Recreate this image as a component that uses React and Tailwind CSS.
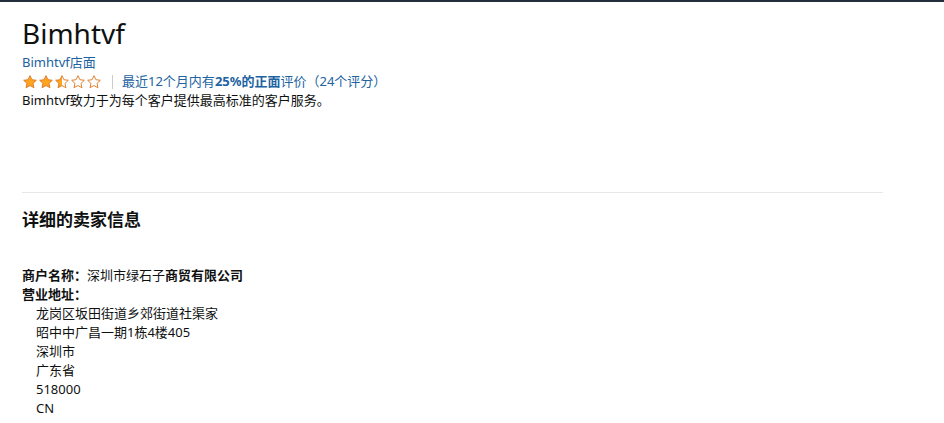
const Star = ({ fill }) => (
  <svg width="16" height="16" viewBox="0 0 24 24" className="shrink-0">
    <defs>
      <linearGradient id="half">
        <stop offset="50%" stopColor="#ffa41c" />
        <stop offset="50%" stopColor="#fff" />
      </linearGradient>
    </defs>
    <path
      d="M12 2.5l2.9 6.1 6.6.8-4.9 4.6 1.3 6.6L12 17.3l-5.9 3.3 1.3-6.6-4.9-4.6 6.6-.8z"
      fill={fill === 'full' ? '#ffa41c' : fill === 'half' ? 'url(#half)' : '#fff'}
      stroke="#de7921"
      strokeWidth="1.4"
      strokeLinejoin="round"
    />
  </svg>
);

const addressLines = [
  '龙岗区坂田街道乡郊街道社渠家',
  '昭中中广昌一期1栋4楼405',
  '深圳市',
  '广东省',
  '518000',
  'CN',
];

export default function App() {
  return (
    <div
      className="min-h-[423px] bg-white border-t-2 border-[#232f3e] text-[#0f1111]"
      style={{ fontFamily: '"Noto Sans", "Noto Sans CJK SC", sans-serif' }}
    >
      <div className="px-[22px] w-[905px]">
        <h1 className="text-[28px] leading-[36px] font-normal mt-[13px]">Bimhtvf</h1>
        <div className="text-[13px] leading-[19px] mt-[2px]">
          <a className="text-[#2162a1] block">Bimhtvf店面</a>
          <div className="flex items-center h-[19px]">
            <div className="flex gap-[0px]">
              <Star fill="full" />
              <Star fill="full" />
              <Star fill="half" />
              <Star fill="empty" />
              <Star fill="empty" />
            </div>
            <span className="w-px h-[14px] bg-[#ccc] ml-[10px] mr-[9px]" />
            <span className="text-[#2162a1]">
              最近12个月内有<b>25%的正面</b>评价（24个评分）
            </span>
          </div>
          <p>Bimhtvf致力于为每个客户提供最高标准的客户服务。</p>
        </div>
        <div className="mt-[82px] border-t border-[#e7e7e7]" />
        <h2 className="text-[17px] leading-[24px] font-bold mt-[15px]">详细的卖家信息</h2>
        <div className="text-[13px] leading-[19px] mt-[34px]">
          <div>
            <span className="font-bold">商户名称：</span>深圳市绿石子<span className="font-bold">商贸有限公司</span>
          </div>
          <div className="font-bold">营业地址：</div>
          <div className="pl-[14px]">
            {addressLines.map((l) => (
              <div key={l}>{l}</div>
            ))}
          </div>
        </div>
      </div>
    </div>
  );
}
